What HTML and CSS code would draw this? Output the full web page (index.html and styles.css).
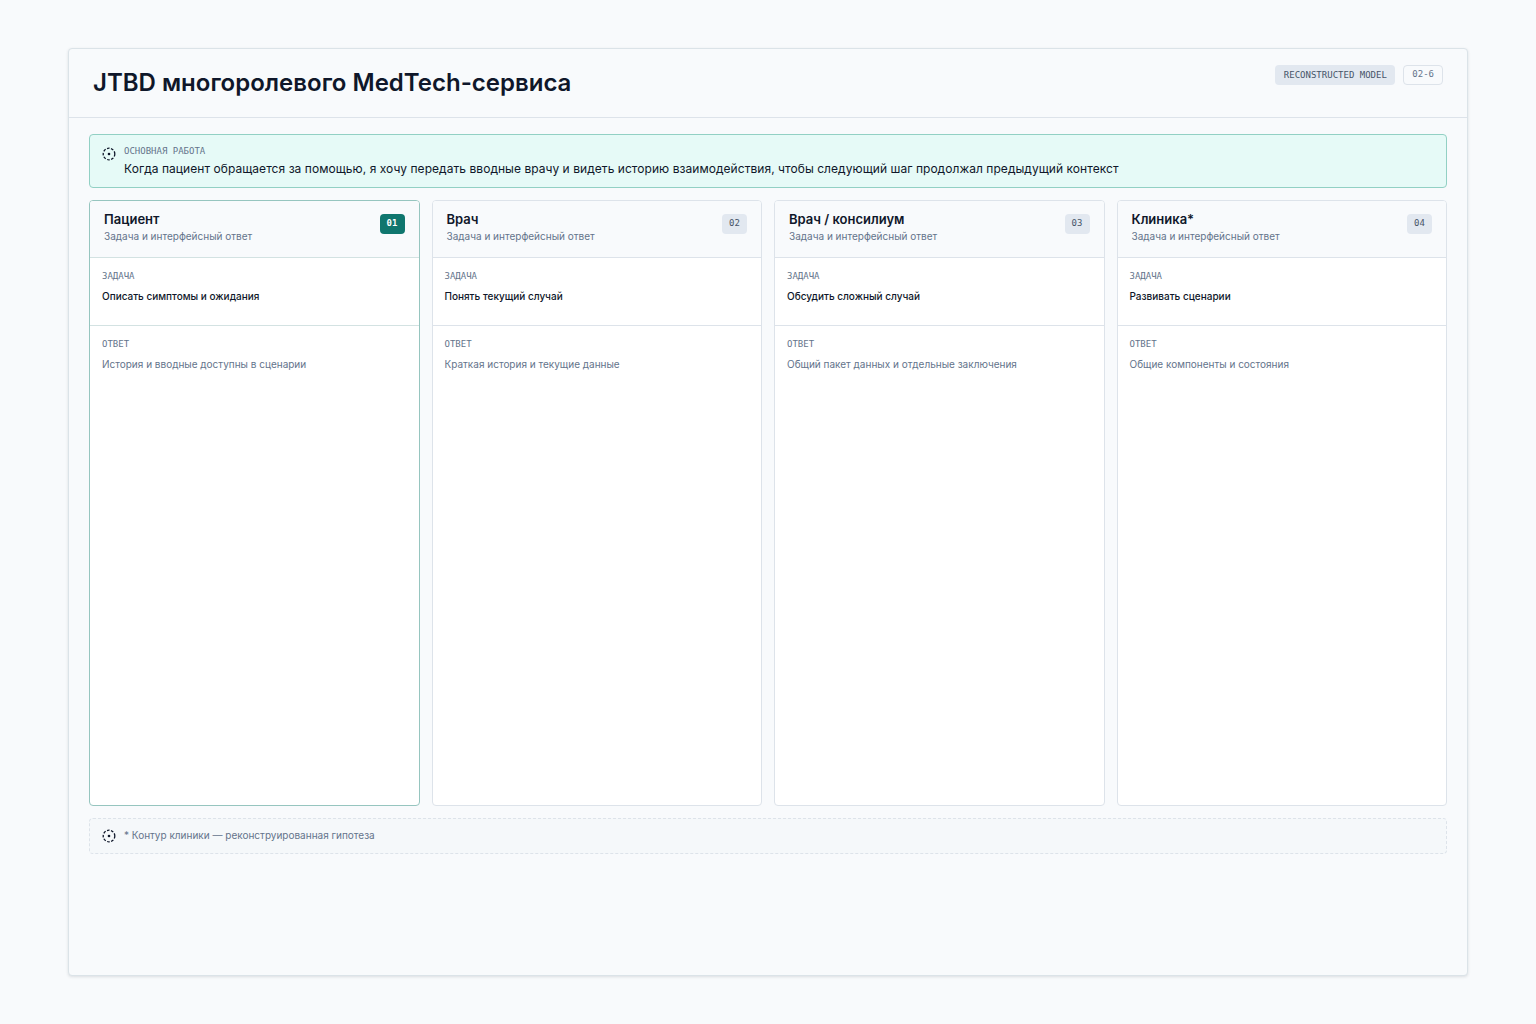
FILE: index.html
```html
<!DOCTYPE html>
<html lang="ru">

<head>
    <meta charset="UTF-8">
    <meta name="viewport" content="width=device-width, initial-scale=1.0">
    <title>JTBD многоролевого MedTech-сервиса</title>
    <link rel="stylesheet" href="styles.css">
</head>

<body>
    <div class="slide">
        <header class="slide-header">
            <h1>JTBD многоролевого MedTech-сервиса</h1>
            <div class="header-tags">
                <span class="tag-model">RECONSTRUCTED MODEL</span>
                <span class="tag-num">02-6</span>
            </div>
        </header>

        <main class="slide-body">
            <section class="main-job">
                <svg class="target-icon" viewBox="0 0 14 14" width="14" height="14">
                    <circle cx="7" cy="7" r="5.8" fill="none" stroke="#0f172a" stroke-width="1.3" stroke-dasharray="2.6 1.5"/>
                    <circle cx="7" cy="7" r="1.3" fill="#0f172a"/>
                </svg>
                <div>
                    <div class="main-job-label">ОСНОВНАЯ РАБОТА</div>
                    <p class="main-job-text">Когда пациент обращается за помощью, я хочу передать вводные врачу и видеть историю взаимодействия, чтобы следующий шаг продолжал предыдущий контекст</p>
                </div>
            </section>

            <section class="roles">
                <article class="role role-active">
                    <div class="role-head">
                        <div>
                            <h2>Пациент</h2>
                            <p>Задача и интерфейсный ответ</p>
                        </div>
                        <span class="role-num">01</span>
                    </div>
                    <div class="role-task">
                        <div class="field-label">ЗАДАЧА</div>
                        <p>Описать симптомы и ожидания</p>
                    </div>
                    <div class="role-answer">
                        <div class="field-label">ОТВЕТ</div>
                        <p>История и вводные доступны в сценарии</p>
                    </div>
                </article>

                <article class="role">
                    <div class="role-head">
                        <div>
                            <h2>Врач</h2>
                            <p>Задача и интерфейсный ответ</p>
                        </div>
                        <span class="role-num">02</span>
                    </div>
                    <div class="role-task">
                        <div class="field-label">ЗАДАЧА</div>
                        <p>Понять текущий случай</p>
                    </div>
                    <div class="role-answer">
                        <div class="field-label">ОТВЕТ</div>
                        <p>Краткая история и текущие данные</p>
                    </div>
                </article>

                <article class="role">
                    <div class="role-head">
                        <div>
                            <h2>Врач / консилиум</h2>
                            <p>Задача и интерфейсный ответ</p>
                        </div>
                        <span class="role-num">03</span>
                    </div>
                    <div class="role-task">
                        <div class="field-label">ЗАДАЧА</div>
                        <p>Обсудить сложный случай</p>
                    </div>
                    <div class="role-answer">
                        <div class="field-label">ОТВЕТ</div>
                        <p>Общий пакет данных и отдельные заключения</p>
                    </div>
                </article>

                <article class="role">
                    <div class="role-head">
                        <div>
                            <h2>Клиника*</h2>
                            <p>Задача и интерфейсный ответ</p>
                        </div>
                        <span class="role-num">04</span>
                    </div>
                    <div class="role-task">
                        <div class="field-label">ЗАДАЧА</div>
                        <p>Развивать сценарии</p>
                    </div>
                    <div class="role-answer">
                        <div class="field-label">ОТВЕТ</div>
                        <p>Общие компоненты и состояния</p>
                    </div>
                </article>
            </section>

            <section class="footnote">
                <svg class="target-icon" viewBox="0 0 14 14" width="14" height="14">
                    <circle cx="7" cy="7" r="5.8" fill="none" stroke="#0f172a" stroke-width="1.3" stroke-dasharray="2.6 1.5"/>
                    <circle cx="7" cy="7" r="1.3" fill="#0f172a"/>
                </svg>
                <span>* Контур клиники — реконструированная гипотеза</span>
            </section>
        </main>
    </div>
</body>

</html>
```

FILE: styles.css
```css
* {
    box-sizing: border-box;
}

body {
    margin: 0;
    padding: 48px 68px;
    background-color: #f8fafc;
    font-family: Inter, "Noto Sans", sans-serif;
    color: #0f172a;
}

p,
h1,
h2 {
    margin: 0;
}

.slide {
    height: 928px;
    background-color: #f8fafc;
    border: 1px solid #dbe3e8;
    border-radius: 4px;
    box-shadow: 0 1px 3px rgba(15, 23, 42, 0.12);
}

.slide-header {
    display: flex;
    justify-content: space-between;
    align-items: flex-start;
    height: 69px;
    padding: 16px 24px;
    border-bottom: 1px solid #dde3ea;
}

.slide-header h1 {
    font-size: 24px;
    line-height: 36px;
    font-weight: 600;
    color: #0f172a;
}

.header-tags {
    display: flex;
    gap: 8px;
}

.tag-model,
.tag-num {
    height: 20px;
    line-height: 20px;
    font-family: "DejaVu Sans Mono", monospace;
    font-size: 9px;
    border-radius: 4px;
}

.tag-model {
    padding: 0 8.5px;
    background-color: #e2e8f0;
    color: #475569;
}

.tag-num {
    padding: 0 8px;
    line-height: 17px;
    border: 1px solid #dde3ea;
    color: #64748b;
}

.slide-body {
    padding: 16px 20px;
}

.main-job {
    display: flex;
    gap: 8px;
    height: 54px;
    padding: 9px 12px;
    background-color: #e6faf7;
    border: 1px solid #92d0c4;
    border-radius: 4px;
}

.target-icon {
    flex-shrink: 0;
    margin-top: 3px;
}

.main-job-label {
    margin-top: 1px;
    font-family: "DejaVu Sans Mono", monospace;
    font-size: 9px;
    line-height: 12px;
    color: #64748b;
}

.main-job-text {
    margin-top: 3px;
    font-size: 12px;
    line-height: 18px;
    letter-spacing: 0.05px;
    color: #0f172a;
}

.roles {
    display: grid;
    grid-template-columns: repeat(4, 1fr);
    gap: 12px;
    height: 606px;
    margin-top: 12px;
}

.role {
    display: flex;
    flex-direction: column;
    background-color: white;
    border: 1px solid #dde3ea;
    border-radius: 4px;
    overflow: hidden;
}

.role-active {
    border-color: #96c5bf;
}

.role-head {
    display: flex;
    justify-content: space-between;
    align-items: flex-start;
    height: 57px;
    padding: 10px 14px;
    background-color: #f8fafc;
    border-bottom: 1px solid #dde3ea;
}

.role-active .role-head,
.role-active .role-task {
    border-bottom-color: #d3e2e2;
}

.role-head h2 {
    font-size: 13px;
    line-height: 17px;
    font-weight: 600;
}

.role-head p {
    font-size: 10px;
    line-height: 16px;
    color: #64748b;
}

.role-num {
    width: 25px;
    height: 20px;
    margin-top: 3px;
    text-align: center;
    font-family: "DejaVu Sans Mono", monospace;
    font-size: 9px;
    line-height: 18px;
    background-color: #e2e8f0;
    color: #475569;
    border-radius: 4px;
}

.role-active .role-num {
    background-color: #0f766e;
    color: white;
    font-weight: 700;
}

.role-task,
.role-answer {
    padding: 12px;
}

.role-task {
    height: 68px;
    border-bottom: 1px solid #dde3ea;
}

.role-answer {
    flex: 1;
}

.field-label {
    font-family: "DejaVu Sans Mono", monospace;
    font-size: 9px;
    line-height: 12px;
    color: #64748b;
}

.role-task p,
.role-answer p {
    margin-top: 6px;
    font-size: 10px;
    line-height: 16px;
}

.role-task p {
    font-weight: 500;
}

.role-answer p {
    color: #64748b;
}

.footnote {
    display: flex;
    align-items: center;
    gap: 8px;
    height: 36px;
    margin-top: 12px;
    padding: 0 12px;
    background-color: #f5f8fa;
    border: 1px dashed #dde3ea;
    border-radius: 4px;
    font-size: 10px;
    line-height: 14px;
    color: #64748b;
}

.footnote span {
    margin-top: -2px;
}

.footnote .target-icon {
    margin-top: 0;
}
```
